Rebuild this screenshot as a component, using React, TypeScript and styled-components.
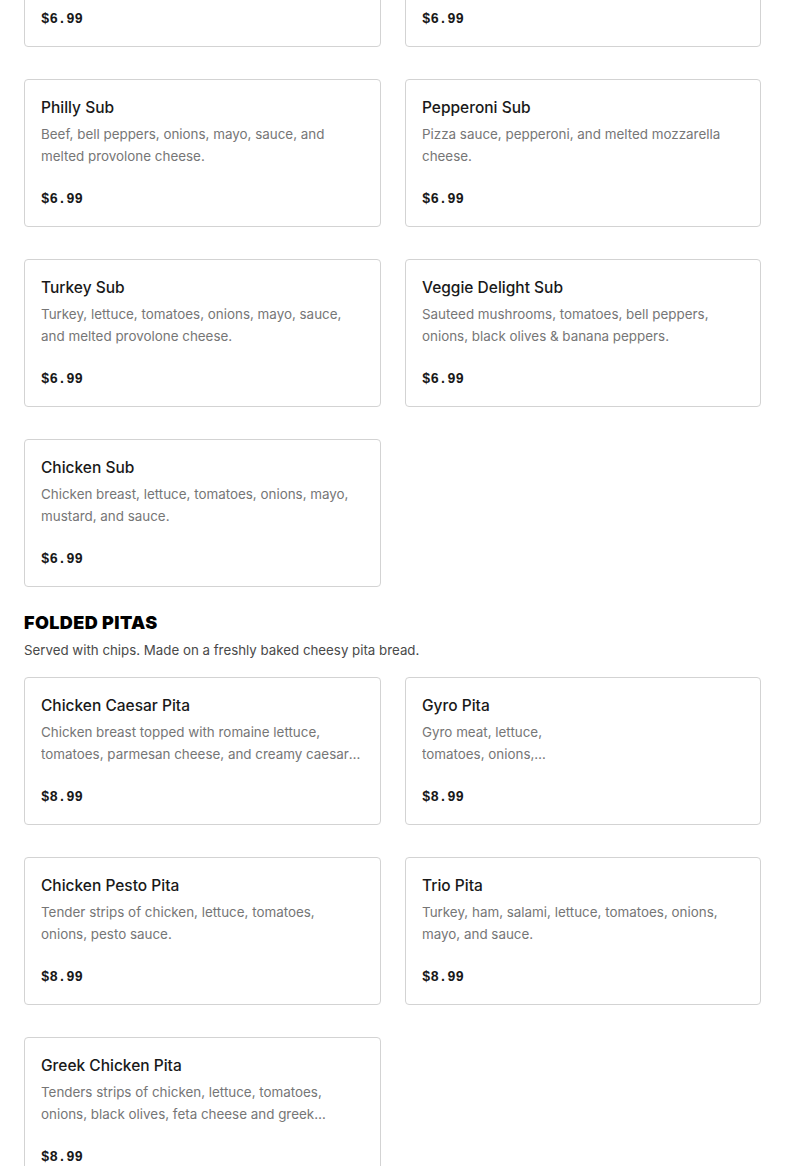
import React from "react";
import styled, { createGlobalStyle } from "styled-components";

type Item = {
  name: string;
  desc: string;
  price: string;
  narrow?: boolean;
};

const subs: Item[] = [
  { name: "Italian Sub", desc: "Ham, salami, pepperoni, lettuce, tomatoes, onions, mayo, and sauce.", price: "$6.99" },
  { name: "Ham Sub", desc: "Ham, lettuce, tomatoes, onions, mayo, sauce, and melted provolone cheese.", price: "$6.99" },
  { name: "Philly Sub", desc: "Beef, bell peppers, onions, mayo, sauce, and melted provolone cheese.", price: "$6.99" },
  { name: "Pepperoni Sub", desc: "Pizza sauce, pepperoni, and melted mozzarella cheese.", price: "$6.99" },
  { name: "Turkey Sub", desc: "Turkey, lettuce, tomatoes, onions, mayo, sauce, and melted provolone cheese.", price: "$6.99" },
  { name: "Veggie Delight Sub", desc: "Sauteed mushrooms, tomatoes, bell peppers, onions, black olives & banana peppers.", price: "$6.99" },
  { name: "Chicken Sub", desc: "Chicken breast, lettuce, tomatoes, onions, mayo, mustard, and sauce.", price: "$6.99" },
];

const pitas: Item[] = [
  { name: "Chicken Caesar Pita", desc: "Chicken breast topped with romaine lettuce, tomatoes, parmesan cheese, and creamy caesar dressing.", price: "$8.99" },
  { name: "Gyro Pita", desc: "Gyro meat, lettuce, tomatoes, onions, and tzatziki sauce.", price: "$8.99", narrow: true },
  { name: "Chicken Pesto Pita", desc: "Tender strips of chicken, lettuce, tomatoes, onions, pesto sauce.", price: "$8.99" },
  { name: "Trio Pita", desc: "Turkey, ham, salami, lettuce, tomatoes, onions, mayo, and sauce.", price: "$8.99" },
  { name: "Greek Chicken Pita", desc: "Tenders strips of chicken, lettuce, tomatoes, onions, black olives, feta cheese and greek dressing.", price: "$8.99" },
];

const GlobalStyle = createGlobalStyle`
  body {
    margin: 0;
    background: #ffffff;
    font-family: Inter, "Liberation Sans", sans-serif;
    overflow: hidden;
  }
`;

const Page = styled.div`
  padding: 0 24px;
  margin-top: -101px;
`;

const Grid = styled.div`
  display: grid;
  grid-template-columns: 357px 356px;
  column-gap: 24px;
  row-gap: 32px;
`;

const Section = styled.section`
  margin-top: 24px;
`;

const Heading = styled.h2`
  margin: 0;
  font-size: 18px;
  line-height: 24px;
  font-weight: 900;
  color: #000;
  letter-spacing: 0.4px;
`;

const SubHeading = styled.p`
  margin: 4px 0 16px;
  font-size: 13.3px;
  line-height: 22px;
  color: #494949;
`;

const Card = styled.div`
  box-sizing: border-box;
  height: 148px;
  border: 1px solid #d3d3d3;
  border-radius: 4px;
  padding: 16px;
  display: flex;
  flex-direction: column;

  & > * {
    flex-shrink: 0;
  }
`;

const Title = styled.div`
  margin-top: 1px;
  font-size: 15.5px;
  line-height: 22px;
  font-weight: 500;
  color: #191919;
`;

const Desc = styled.div<{ $narrow?: boolean }>`
  margin-top: 4px;
  font-size: 13.4px;
  line-height: 22px;
  color: #767676;
  max-width: ${(p) => (p.$narrow ? "135px" : "none")};
  height: 44px;
  display: -webkit-box;
  -webkit-line-clamp: 2;
  -webkit-box-orient: vertical;
  overflow: hidden;
`;

const Price = styled.div`
  margin-top: 20px;
  font-family: "Liberation Mono", "DejaVu Sans Mono", monospace;
  font-weight: 700;
  font-size: 14px;
  line-height: 24px;
  color: #191919;
`;

const MenuCard = ({ item }: { item: Item }) => (
  <Card>
    <Title>{item.name}</Title>
    <Desc $narrow={item.narrow}>{item.desc}</Desc>
    <Price>{item.price}</Price>
  </Card>
);

export default function App() {
  return (
    <Page>
      <GlobalStyle />
      <Grid>
        {subs.map((s) => (
          <MenuCard key={s.name} item={s} />
        ))}
      </Grid>
      <Section>
        <Heading>FOLDED PITAS</Heading>
        <SubHeading>Served with chips. Made on a freshly baked cheesy pita bread.</SubHeading>
        <Grid>
          {pitas.map((p) => (
            <MenuCard key={p.name} item={p} />
          ))}
        </Grid>
      </Section>
    </Page>
  );
}
